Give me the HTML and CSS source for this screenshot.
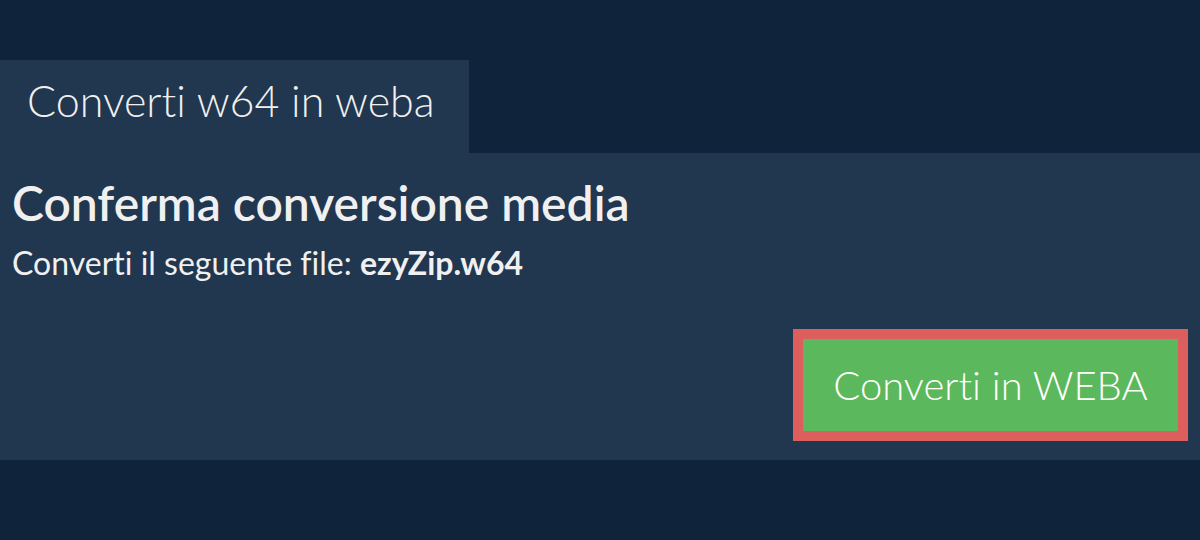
FILE: index.html
```html
<!DOCTYPE html>
<html lang="it">
<head>
    <meta charset="UTF-8">
    <meta name="viewport" content="width=device-width, initial-scale=1.0">
    <title>Converti w64 in weba</title>
    <link rel="stylesheet" href="styles.css">
</head>
<body>
    <div class="page">
        <div class="tab">Converti w64 in weba</div>
        <div class="panel">
            <h1 class="panel-title">Conferma conversione media</h1>
            <p class="panel-text">Converti il seguente file: <strong>ezyZip.w64</strong></p>
            <div class="actions">
                <button class="convert-btn">Converti in WEBA</button>
            </div>
        </div>
    </div>
</body>
</html>
```
FILE: styles.css
```css
body {
    margin: 0;
    background: #0f233a;
    font-family: 'Lato', sans-serif;
    font-variant-ligatures: none;
    color: #f0f0f0;
}

.page {
    padding-top: 60px;
}

/* ===== TAB ===== */
.tab {
    display: inline-block;
    width: 469px;
    box-sizing: border-box;
    height: 93px;
    padding: 16px 0 0 27px;
    background: #21364f;
    font-size: 43px;
    font-weight: 300;
    line-height: 50px;
    vertical-align: top;
}

/* ===== PANEL ===== */
.panel {
    background: #21364f;
    height: 307px;
    padding: 0 12px;
    box-sizing: border-box;
}

.panel-title {
    margin: 0;
    padding-top: 22px;
    font-size: 48px;
    font-weight: 600;
    line-height: 56px;
}

.panel-text {
    margin: 14px 0 0;
    font-size: 32px;
    line-height: 36px;
}

.actions {
    display: flex;
    justify-content: flex-end;
    margin-top: 48px;
}

.convert-btn {
    width: 395px;
    height: 112px;
    margin-right: 0;
    background: #5cb85c;
    border: 10px solid #dc5f5d;
    color: #fff;
    font-family: 'Lato', sans-serif;
    font-variant-ligatures: none;
    font-size: 40px;
    font-weight: 300;
    cursor: pointer;
}
```
